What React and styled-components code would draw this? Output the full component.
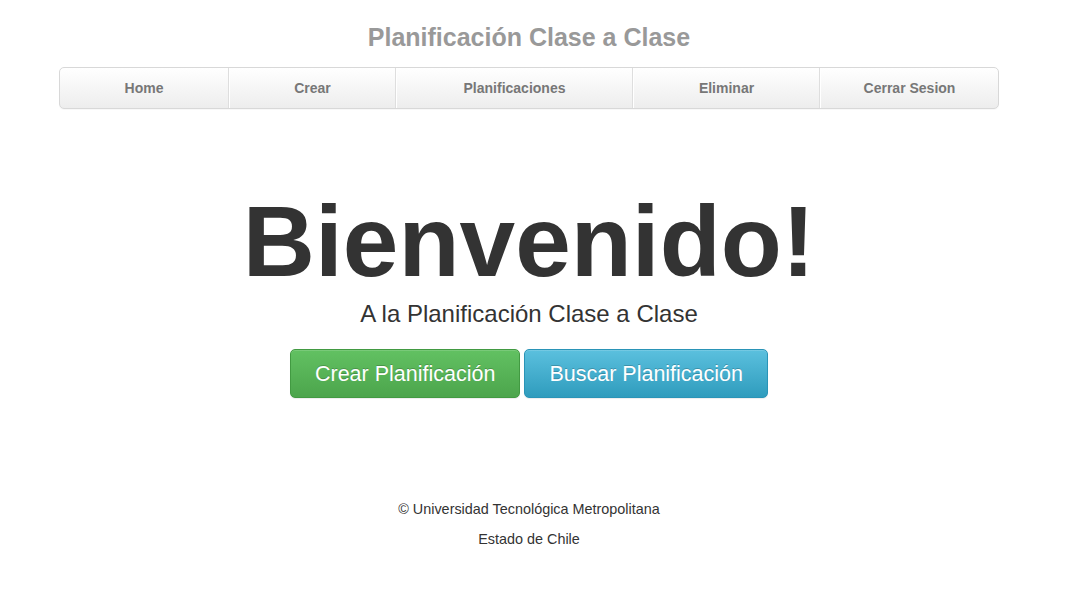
import styled, { createGlobalStyle } from 'styled-components';

const GlobalStyle = createGlobalStyle`
  html, body {
    margin: 0;
    padding: 0;
    background: #fff;
  }
  body {
    font-family: "Liberation Sans", Arial, sans-serif;
    font-size: 14px;
    color: #333;
  }
`;

const Page = styled.div`
  width: 1058px;
`;

const Container = styled.div`
  width: 940px;
  margin: 0 auto;
`;

const Masthead = styled.header`
  padding-top: 24px;
`;

const Brand = styled.h3`
  margin: 0;
  font-size: 25px;
  line-height: 26px;
  font-weight: bold;
  color: #999;
  text-align: center;
`;

const Nav = styled.ul`
  display: grid;
  grid-template-columns: 169px 167px 237px 187px 178px;
  margin: 17px 0 0;
  padding: 0;
  list-style: none;
  border: 1px solid #d8d8d8;
  border-radius: 5px;
  background-image: linear-gradient(to bottom, #ffffff 0%, #ededed 100%);
  box-shadow: 0 1px 1px rgba(0, 0, 0, 0.03);
  overflow: hidden;
`;

const NavItem = styled.li`
  border-left: 1px solid #fff;
  border-right: 1px solid #dedede;

  &:first-child {
    border-left: 0;
  }
  &:last-child {
    border-right: 0;
  }

  a {
    display: block;
    height: 40px;
    line-height: 41px;
    text-align: center;
    font-size: 14px;
    font-weight: bold;
    color: #777;
    text-decoration: none;
  }
`;

const Hero = styled.section`
  text-align: center;
  padding-top: 77px;
`;

const Title = styled.h1`
  margin: 0;
  font-size: 100px;
  line-height: 110px;
  font-weight: bold;
  color: #333;
`;

const Lead = styled.p`
  margin: 3px 0 0;
  font-size: 24px;
  line-height: 30px;
  color: #333;
`;

const Actions = styled.div`
  display: flex;
  justify-content: center;
  gap: 4px;
  margin-top: 20px;
`;

const palette = {
  success: { top: '#62c162', bottom: '#4ca54c', border: '#429a42' },
  info: { top: '#5bc0de', bottom: '#2f9cbd', border: '#2a94b7' },
};

const Button = styled.a`
  display: inline-block;
  padding: 11px 24px 9px;
  font-size: 21.5px;
  line-height: 27px;
  color: #fff;
  text-decoration: none;
  border-radius: 5px;
  border: 1px solid ${(p) => palette[p.$variant].border};
  background-image: linear-gradient(
    to bottom,
    ${(p) => palette[p.$variant].top} 0%,
    ${(p) => palette[p.$variant].bottom} 100%
  );
  text-shadow: 0 -1px 0 rgba(0, 0, 0, 0.2);
  box-shadow: inset 0 1px 0 rgba(255, 255, 255, 0.15), 0 1px 1px rgba(0, 0, 0, 0.075);
`;

const Footer = styled.footer`
  margin-top: 101px;
  text-align: center;

  p {
    margin: 0 0 10px;
    font-size: 14.4px;
    line-height: 20px;
    color: #333;
  }
`;

const links = ['Home', 'Crear', 'Planificaciones', 'Eliminar', 'Cerrar Sesion'];

function App() {
  return (
    <Page>
      <GlobalStyle />
      <Container>
        <Masthead>
          <Brand>Planificación Clase a Clase</Brand>
          <Nav>
            {links.map((label) => (
              <NavItem key={label}>
                <a href="#">{label}</a>
              </NavItem>
            ))}
          </Nav>
        </Masthead>
        <Hero>
          <Title>Bienvenido!</Title>
          <Lead>A la Planificación Clase a Clase</Lead>
          <Actions>
            <Button href="#" $variant="success">Crear Planificación</Button>
            <Button href="#" $variant="info">Buscar Planificación</Button>
          </Actions>
        </Hero>
        <Footer>
          <p>© Universidad Tecnológica Metropolitana</p>
          <p>Estado de Chile</p>
        </Footer>
      </Container>
    </Page>
  );
}

export default App;
